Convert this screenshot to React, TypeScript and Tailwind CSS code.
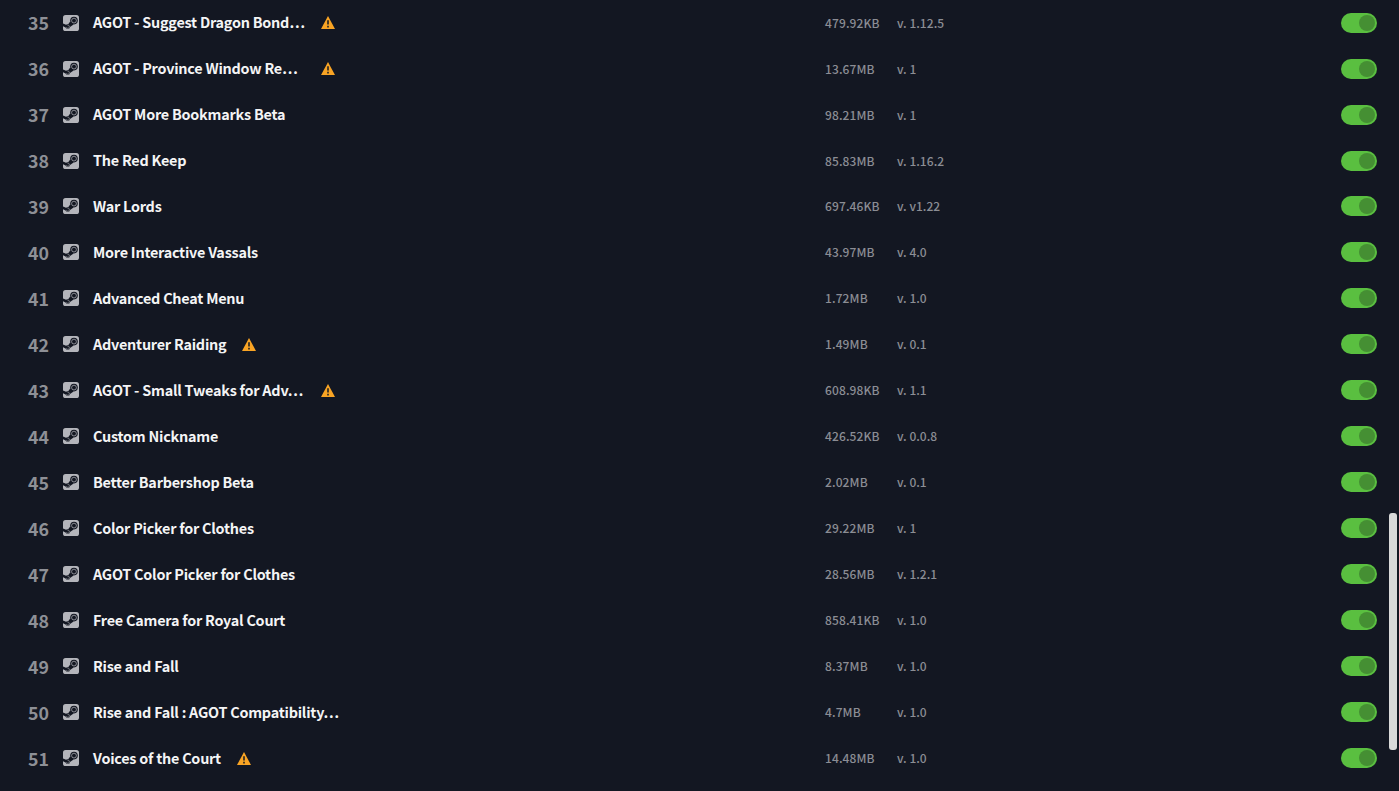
interface Mod {
    order: number;
    name: string;
    size: string;
    version: string;
    warning?: boolean;
}

const mods: Mod[] = [
    { order: 35, name: "AGOT - Suggest Dragon Bond…", size: "479.92KB", version: "1.12.5", warning: true },
    { order: 36, name: "AGOT - Province Window Re…", size: "13.67MB", version: "1", warning: true },
    { order: 37, name: "AGOT More Bookmarks Beta", size: "98.21MB", version: "1" },
    { order: 38, name: "The Red Keep", size: "85.83MB", version: "1.16.2" },
    { order: 39, name: "War Lords", size: "697.46KB", version: "v1.22" },
    { order: 40, name: "More Interactive Vassals", size: "43.97MB", version: "4.0" },
    { order: 41, name: "Advanced Cheat Menu", size: "1.72MB", version: "1.0" },
    { order: 42, name: "Adventurer Raiding", size: "1.49MB", version: "0.1", warning: true },
    { order: 43, name: "AGOT - Small Tweaks for Adv…", size: "608.98KB", version: "1.1", warning: true },
    { order: 44, name: "Custom Nickname", size: "426.52KB", version: "0.0.8" },
    { order: 45, name: "Better Barbershop Beta", size: "2.02MB", version: "0.1" },
    { order: 46, name: "Color Picker for Clothes", size: "29.22MB", version: "1" },
    { order: 47, name: "AGOT Color Picker for Clothes", size: "28.56MB", version: "1.2.1" },
    { order: 48, name: "Free Camera for Royal Court", size: "858.41KB", version: "1.0" },
    { order: 49, name: "Rise and Fall", size: "8.37MB", version: "1.0" },
    { order: 50, name: "Rise and Fall : AGOT Compatibility…", size: "4.7MB", version: "1.0" },
    { order: 51, name: "Voices of the Court", size: "14.48MB", version: "1.0", warning: true },
];

const SteamIcon = () => (
    <svg viewBox="0 0 16 16" className="size-4 shrink-0">
        <rect width="16" height="16" rx="2.6" fill="#b4b5bb" />
        <g fill="#131722">
            <path d="M0 8.6 L3.6 10.1 L5 9.5 L7.2 6.4 L10.6 9.4 L7 12 L3.6 12.9 L0 11.3 Z" />
            <circle cx="11" cy="5.6" r="3.8" />
            <circle cx="4.8" cy="11.6" r="2.3" />
        </g>
        <circle cx="11" cy="5.6" r="2.4" fill="none" stroke="#b4b5bb" strokeWidth="0.7" />
        <path d="M3.3 12.3 A1.6 1.6 0 1 0 4.4 10.1" fill="none" stroke="#b4b5bb" strokeWidth="0.6" />
    </svg>
);

const WarningIcon = () => (
    <svg viewBox="0 0 14 13" className="h-[13px] w-3.5 shrink-0">
        <path d="M7 0 L14 13 H0 Z" fill="#f9a424" />
        <path d="M6 4.2 h2 v4.3 h-2 Z M6 9.7 h2 v1.7 h-2 Z" fill="#4a3a22" />
    </svg>
);

const Toggle = () => (
    <button
        role="switch"
        aria-checked="true"
        className="flex h-5 w-9 items-center justify-end rounded-full bg-[#5abf40] pr-0.5"
    >
        <span className="size-4 rounded-full bg-[#458f33]" />
    </button>
);

const ModRow = ({ mod }: { mod: Mod }) => (
    <li className="flex h-[45.98px] items-center pr-[22px] pl-7">
        <span className="w-[35px] pb-px text-[17.8px] leading-6 font-bold text-[#8e9096]">{mod.order}</span>
        <SteamIcon />
        <div className="ml-3.5 flex w-[732px] items-center gap-4">
            <span
                className={`pb-px text-[14.4px] leading-5 font-bold tracking-[-0.23px] whitespace-nowrap text-[#f4f4f5] ${
                    mod.name.endsWith("…") ? "min-w-[212px]" : ""
                }`}
            >
                {mod.name}
            </span>
            {mod.warning && <WarningIcon />}
        </div>
        <span className="w-[72px] text-[12px] leading-5 font-medium tracking-[0.12px] text-[#8b8d94]">{mod.size}</span>
        <span className="text-[12px] leading-5 font-medium tracking-[0.04px] text-[#8b8d94]">v. {mod.version}</span>
        <div className="ml-auto">
            <Toggle />
        </div>
    </li>
);

export default function App() {
    return (
        <main className="flex h-[791px] w-full overflow-hidden bg-[#131722] font-['Noto_Sans_CJK_JP',sans-serif]">
            <ul className="-mt-[0.395px] w-[1399px] shrink-0">
                {mods.map((mod) => (
                    <ModRow key={mod.order} mod={mod} />
                ))}
            </ul>
            {/* Scrollbar thumb */}
            <div className="-ml-2.5 mt-[513px] h-[237px] w-2 shrink-0 rounded-[3px] bg-[#d9d9d9]" />
        </main>
    );
}
